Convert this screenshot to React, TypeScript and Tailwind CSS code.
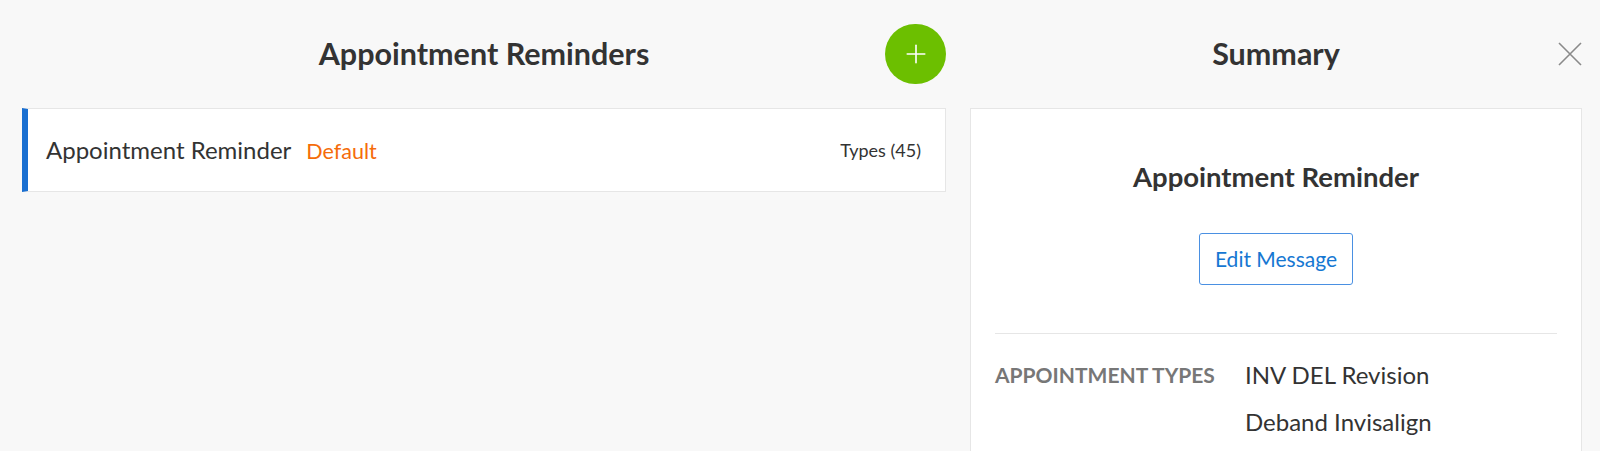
import { Plus } from "lucide-react";

export default function App() {
  const types = ["INV DEL Revision", "Deband Invisalign"];

  return (
    <div
      className="h-screen w-full overflow-hidden bg-[#f8f8f8] text-[#333]"
      style={{ fontFamily: "Lato, 'Open Sans', sans-serif" }}
    >
      <div className="flex gap-6 pl-[22px] pr-[18px]">
        {/* Left column */}
        <div className="flex w-[924px] flex-col">
          <div className="grid h-[108px] grid-cols-[61px_1fr_61px] items-center">
            <div />
            <h1 className="text-center text-[30.5px] font-bold text-[#333]">Appointment Reminders</h1>
            <button className="flex h-[60px] w-[61px] items-center justify-center rounded-full bg-[#6cbf00]">
              <Plus className="h-[30px] w-[30px] text-white" strokeWidth={1.3} />
            </button>
          </div>

          <div className="flex h-[84px] items-center justify-between border border-l-[6px] border-[#e6e6e6] border-l-[#1a6fd1] bg-white pl-[18px] pr-[24px]">
            <div className="flex items-baseline gap-[15px]">
              <span className="text-[24px] text-[#333]">Appointment Reminder</span>
              <span className="text-[21.5px] text-[#f56c0a]">Default</span>
            </div>
            <span className="text-[18px] text-[#333]">Types (45)</span>
          </div>
        </div>

        {/* Right column */}
        <div className="flex w-[612px] flex-col">
          <div className="grid h-[108px] grid-cols-[24px_1fr_24px] items-center">
            <div />
            <h2 className="text-center text-[30.5px] font-bold text-[#333]">Summary</h2>
            <button className="flex items-center justify-center text-[#8a8a8a]">
              <svg width="24" height="24" viewBox="0 0 24 24" fill="none" stroke="currentColor" strokeWidth="1.6">
                <path d="M1 1 L23 23 M23 1 L1 23" />
              </svg>
            </button>
          </div>

          <div className="flex h-[400px] flex-col border border-[#e6e6e6] bg-white px-[24px] pt-[52px]">
            <h3 className="text-center text-[27.5px] font-bold leading-[32px] text-[#333]">Appointment Reminder</h3>
            <div className="mt-[40px] flex justify-center">
              <button className="h-[52px] rounded-[3px] border border-[#4a90e2] px-[15px] text-[21px] text-[#1677d2]">
                Edit Message
              </button>
            </div>
            <div className="mt-[48px] border-t border-[#e6e6e6]" />
            <div className="mt-[25px] flex">
              <div className="w-[250px] text-[21px] font-bold leading-[32px] text-[#777]">APPOINTMENT TYPES</div>
              <div className="flex flex-col gap-[15px]">
                {types.map((t) => (
                  <div key={t} className="text-[24px] leading-[32px] text-[#333]">
                    {t}
                  </div>
                ))}
              </div>
            </div>
          </div>
        </div>
      </div>
    </div>
  );
}
